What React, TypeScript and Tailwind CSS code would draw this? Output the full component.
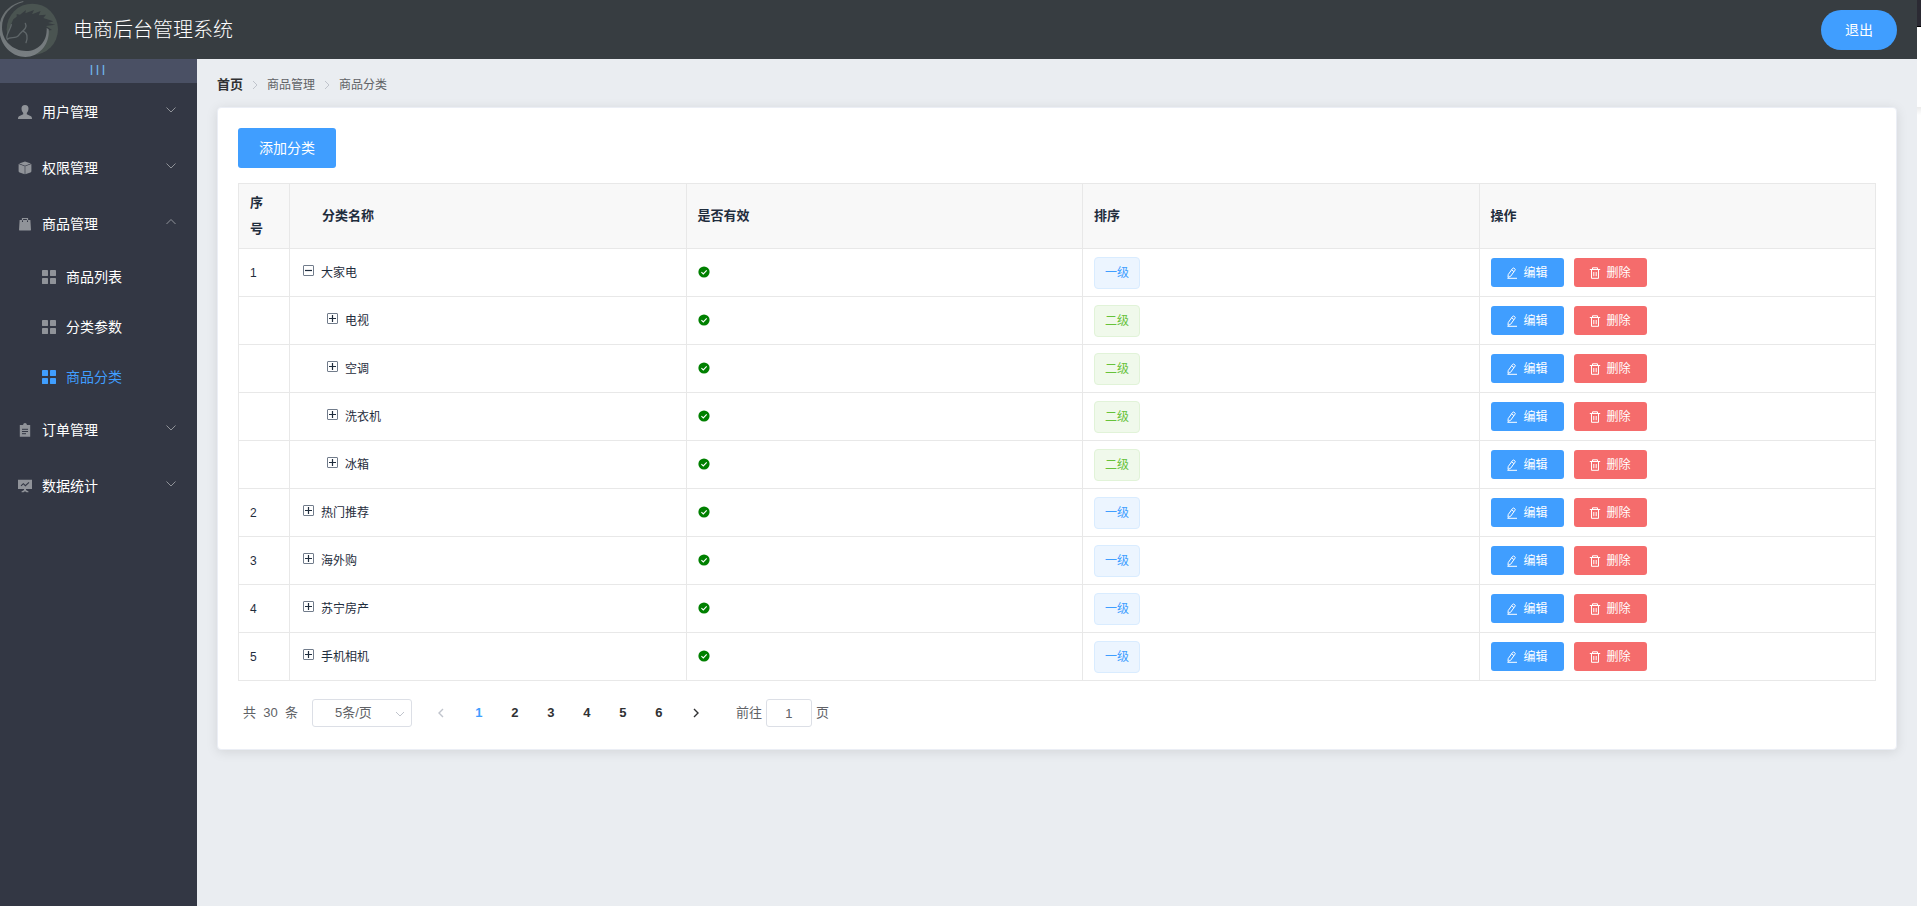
import { useState } from 'react';
import type { ReactNode } from 'react';
import clsx from 'clsx';

type MenuItem = { id: string; label: string; icon: ReactNode; children?: string[] };
type Category = { id: number; index?: number; name: string; level: 1 | 2; open?: boolean };

const MENUS: MenuItem[] = [
  { id: 'users', label: '用户管理', icon: <UserIcon /> },
  { id: 'rights', label: '权限管理', icon: <BoxIcon /> },
  { id: 'goods', label: '商品管理', icon: <BagIcon />, children: ['商品列表', '分类参数', '商品分类'] },
  { id: 'orders', label: '订单管理', icon: <ClipboardIcon /> },
  { id: 'reports', label: '数据统计', icon: <BoardIcon /> },
];

const CATEGORIES: Category[] = [
  { id: 1, index: 1, name: '大家电', level: 1, open: true },
  { id: 2, name: '电视', level: 2 },
  { id: 3, name: '空调', level: 2 },
  { id: 4, name: '洗衣机', level: 2 },
  { id: 5, name: '冰箱', level: 2 },
  { id: 6, index: 2, name: '热门推荐', level: 1 },
  { id: 7, index: 3, name: '海外购', level: 1 },
  { id: 8, index: 4, name: '苏宁房产', level: 1 },
  { id: 9, index: 5, name: '手机相机', level: 1 },
];

const PAGES = [1, 2, 3, 4, 5, 6];

function UserIcon() {
  return (
    <svg width="14" height="14" viewBox="0 0 14 14" fill="currentColor">
      <path d="M7 0C9.4 0 10.6 1.6 10.5 3.8C10.4 5.6 9.7 7 8.8 7.9V9.2L13 11.2C13.7 11.6 14 12.4 14 14H0C0 12.4 .3 11.6 1 11.2L5.2 9.2V7.9C4.3 7 3.6 5.6 3.5 3.8C3.4 1.6 4.6 0 7 0Z" />
    </svg>
  );
}

function BoxIcon() {
  return (
    <svg width="14" height="14" viewBox="0 0 14 14" fill="currentColor">
      <path d="M7 .6L12.8 2.6L7 4.7L1.2 2.6Z" />
      <path d="M.6 3.1L6.7 5.3V13.3L1.6 11.6Q.6 11.2 .6 10.3Z" />
      <path d="M13.4 3.1L7.3 5.3V13.3L12.4 11.6Q13.4 11.2 13.4 10.3Z" />
    </svg>
  );
}

function BagIcon() {
  return (
    <svg width="14" height="14" viewBox="0 0 14 14">
      <path d="M4.5 4.5V1.5H9.5V4.5" fill="none" stroke="currentColor" strokeWidth="1.2" />
      <path d="M1.6 3H12.4L13 12.8Q13 13.4 12.4 13.4H1.6Q1 13.4 1 12.8Z" fill="currentColor" />
      <path d="M4.5 3.4V5M9.5 3.4V5" stroke="#333744" strokeWidth="1" />
    </svg>
  );
}

function ClipboardIcon() {
  return (
    <svg width="14" height="14" viewBox="0 0 14 14">
      <path d="M2 2H5Q5.3 0 7 0Q8.7 0 9 2H12.2V13.8H1.8V2Z" fill="currentColor" />
      <path d="M4 6.3H10M4 8.5H10M4 10.7H8" stroke="#333744" strokeWidth="1" />
    </svg>
  );
}

function BoardIcon() {
  return (
    <svg width="14" height="14" viewBox="0 0 14 14">
      <path d="M0 .8H14V10H8V11L10.5 12.5V13.3H8.5L7 12.3L5.5 13.3H3.5V12.5L6 11V10H0Z" fill="currentColor" />
      <path d="M3 6.8L5.3 4.7L7.4 6.7L11 3.4" fill="none" stroke="#333744" strokeWidth="1.1" />
    </svg>
  );
}

function GridIcon() {
  return (
    <svg width="14" height="14" viewBox="0 0 14 14" fill="currentColor">
      <rect width="6" height="6" rx=".4" />
      <rect x="8" width="6" height="6" rx=".4" />
      <rect y="8" width="6" height="6" rx=".4" />
      <rect x="8" y="8" width="6" height="6" rx=".4" />
    </svg>
  );
}

function Chevron({ d, className }: { d: string; className?: string }) {
  return (
    <svg width="10" height="10" viewBox="0 0 10 10" fill="none" stroke="currentColor" className={className}>
      <path d={d} />
    </svg>
  );
}

function EditIcon() {
  return (
    <svg width="12" height="12" viewBox="0 0 12 12" fill="none" stroke="currentColor">
      <path d="M2 10.4L2.2 7.6L6.6 1.4Q7.2.7 8 1.2L8.9 1.9Q9.5 2.4 9.1 3.1L4.6 9.3Z" />
      <path d="M5.6 2.9L7.9 4.6M1.4 11.3H11" />
    </svg>
  );
}

function TrashIcon() {
  return (
    <svg width="12" height="12" viewBox="0 0 12 12" fill="none" stroke="currentColor">
      <path d="M.8 2.5H11.2M3.5 2.5V.8H8.5V2.5M2.5 3V11.3H9.5V3M4.8 5V9.2M7.2 5V9.2" />
    </svg>
  );
}

function CheckIcon() {
  return (
    <svg width="12" height="12" viewBox="0 0 12 12" aria-label="有效" className="mb-0.5">
      <circle cx="6" cy="6" r="5.6" fill="#008000" />
      <path d="M3.4 6.2L5.3 8L8.7 4.4" fill="none" stroke="#fff" strokeWidth="1.1" />
    </svg>
  );
}

function ToggleIcon({ open }: { open?: boolean }) {
  return (
    <svg width="12" height="12" viewBox="0 0 12 12" fill="none">
      <rect x=".5" y=".5" width="10" height="10" rx=".5" stroke="#717c8b" />
      <path d={open ? 'M2 5.5H9' : 'M2 5.5H9M5.5 2V9'} stroke="#1f2d3d" strokeWidth="1.2" />
    </svg>
  );
}

function Logo() {
  return (
    <svg width="59" height="59" viewBox="0 0 177 177">
      <defs>
        <linearGradient id="ring" x1="0" y1="0" x2="0" y2="1">
          <stop offset="0" stopColor="#666c6e" />
          <stop offset="1" stopColor="#797f82" />
        </linearGradient>
      </defs>
      <circle cx="97" cy="88" r="77" fill="#4a5451" />
      <path
        d="M18 112L32 76L40 58L50 50L50 42L60 44L78 30L76 40L102 30L96 43L122 33L116 46L138 44L130 54L160 64L144 69L166 74L138 78L156 90L140 92L144 112L128 140L75 162L35 145Z"
        fill="#373d41"
      />
      <path
        d="M70 3C28 12-2 44-2 86C-2 134 34 171 76 171C118 171 150 132 146 88L140 84C142 124 116 153 78 153C38 153 6 122 6 82C6 44 32 16 70 6Z"
        fill="url(#ring)"
      />
      <g fill="none" stroke="#5f6669" strokeWidth="4" strokeLinecap="round">
        <path d="M76 70C84 86 66 92 56 106C48 118 30 108 22 118C14 108 32 88 34 74" />
        <path d="M70 94C82 98 84 112 78 128" />
      </g>
    </svg>
  );
}

function Sidebar() {
  const [openId, setOpenId] = useState('goods');
  const [active, setActive] = useState('商品分类');

  return (
    <aside className="w-[197px] shrink-0 bg-[#333744] text-sm text-white">
      <button className="flex h-6 w-full items-center justify-center bg-[#4a5064] pr-0.5 font-['Liberation_Mono',monospace] text-[10px] font-bold text-[#6fb4e8]">
        |||
      </button>
      <nav className="pt-px">
        {MENUS.map((menu) => (
          <div key={menu.id}>
            <button
              onClick={() => setOpenId(openId === menu.id ? '' : menu.id)}
              className="flex h-14 w-full items-center gap-[5px] pr-[21px] pl-[13px]"
            >
              <span className="flex w-6 justify-center text-[#909399]">{menu.icon}</span>
              <span>{menu.label}</span>
              <Chevron
                d={openId === menu.id ? 'M.5 7L5 2.5L9.5 7' : 'M.5 2.5L5 7L9.5 2.5'}
                className="mb-1 ml-auto text-[#909399]"
              />
            </button>
            {openId === menu.id &&
              menu.children?.map((child) => (
                <a
                  key={child}
                  href="#"
                  onClick={() => setActive(child)}
                  className={clsx('flex h-[50px] items-center gap-[5px] pl-[37px]', active === child && 'text-[#409eff]')}
                >
                  <span className={clsx('flex w-6 justify-center', active !== child && 'text-[#909399]')}>
                    <GridIcon />
                  </span>
                  {child}
                </a>
              ))}
          </div>
        ))}
      </nav>
    </aside>
  );
}

function CategoryRow({ row }: { row: Category }) {
  return (
    <tr className="h-12">
      <td className="border border-[#e8e8e8] px-[11px]">{row.index}</td>
      <td className={clsx('border border-[#e8e8e8]', row.level === 1 ? 'pl-[13px]' : 'pl-[37px]')}>
        <div className="flex items-center gap-1.5">
          <button aria-label={row.open ? '收起' : '展开'} className="mb-1">
            <ToggleIcon open={row.open} />
          </button>
          {row.name}
        </div>
      </td>
      <td className="border border-[#e8e8e8] px-[11px]">
        <CheckIcon />
      </td>
      <td className="border border-[#e8e8e8] px-[11px]">
        <span
          className={clsx(
            'inline-flex h-8 items-center rounded border px-2.5 align-middle',
            row.level === 1
              ? 'border-[#d9ecff] bg-[#ecf5ff] text-[#409eff]'
              : 'border-[#e1f3d8] bg-[#f0f9eb] text-[#67c23a]',
          )}
        >
          {row.level === 1 ? '一级' : '二级'}
        </span>
      </td>
      <td className="border border-[#e8e8e8] px-[11px]">
        <div className="flex gap-2.5 text-white">
          <button className="flex h-[29px] w-[73px] items-center justify-center gap-[5px] rounded-[3px] bg-[#409eff]">
            <EditIcon />
            编辑
          </button>
          <button className="flex h-[29px] w-[73px] items-center justify-center gap-[5px] rounded-[3px] bg-[#f56c6c]">
            <TrashIcon />
            删除
          </button>
        </div>
      </td>
    </tr>
  );
}

function Pagination() {
  const [page, setPage] = useState(1);

  return (
    <div className="mt-4 flex items-center px-[5px] py-0.5 text-[13px] text-[#606266]">
      <span className="mr-3.5 whitespace-pre">共  30  条</span>
      <div className="relative">
        <select
          aria-label="每页条数"
          className="block h-7 w-[100px] appearance-none rounded-[3px] border border-[#dcdfe6] bg-white pl-[22px] text-[13px]"
        >
          <option>5条/页</option>
          <option>10条/页</option>
          <option>15条/页</option>
        </select>
        <Chevron d="M1 3L5 7L9 3" className="pointer-events-none absolute top-2.5 right-[7px] text-[#c0c4cc]" />
      </div>
      <button aria-label="上一页" disabled className="ml-2.5 flex h-7 w-[39px] items-center justify-center text-[#c0c4cc]">
        <Chevron d="M7 1L3 5L7 9" className="stroke-[1.4]" />
      </button>
      {PAGES.map((n) => (
        <button
          key={n}
          onClick={() => setPage(n)}
          className={clsx('h-7 w-9 font-bold', n === page ? 'text-[#409eff]' : 'text-[#303133]')}
        >
          {n}
        </button>
      ))}
      <button aria-label="下一页" className="flex h-7 w-[39px] items-center justify-center text-[#303133]">
        <Chevron d="M3 1L7 5L3 9" className="stroke-[1.4]" />
      </button>
      <label className="ml-5 flex items-center gap-1">
        前往
        <input
          value={page}
          onChange={(e) => setPage(Number(e.target.value) || 1)}
          className="h-7 w-[46px] rounded-[3px] border border-[#dcdfe6] bg-white text-center"
        />
        页
      </label>
    </div>
  );
}

export default function App() {
  return (
    <div className="flex min-h-screen font-['Liberation_Sans','Noto_Sans_CJK_SC',sans-serif]">
      <div className="flex min-w-0 flex-1 flex-col">
        <header className="flex h-[59px] items-center justify-between bg-[#373d41] pr-5 text-white">
          <div className="flex items-center gap-3.5">
            <Logo />
            <h1 className="text-xl font-light">电商后台管理系统</h1>
          </div>
          <button className="h-10 rounded-full bg-[#409eff] px-6 text-sm">退出</button>
        </header>

        <div className="flex flex-1">
          <Sidebar />
          <main className="min-w-0 flex-1 bg-[#eaedf1] p-5">
            <nav className="mb-4 flex items-center text-xs/3 text-[#606266]">
              <a href="#" className="text-[13px]/3 font-bold text-[#303133]">
                首页
              </a>
              <Chevron d="M3 1L7 5L3 9" className="mx-[7px] text-[#c0c4cc]" />
              <span>商品管理</span>
              <Chevron d="M3 1L7 5L3 9" className="mx-[7px] text-[#c0c4cc]" />
              <span>商品分类</span>
            </nav>

            <section className="rounded border border-[#ebeef5] bg-white p-5 shadow-[0_2px_12px_rgba(0,0,0,0.1)]">
              <button className="h-10 rounded-[3px] bg-[#409eff] px-[21px] text-sm text-white">添加分类</button>

              <table className="mt-[15px] w-full table-fixed border-collapse text-xs text-[#1f2d3d]">
                <colgroup>
                  <col className="w-[51px]" />
                  <col />
                  <col />
                  <col />
                  <col />
                </colgroup>
                <thead>
                  <tr className="h-[65px] bg-[#f8f8f8] text-left text-[13px]/[26px]">
                    <th className="border border-[#e8e8e8] pr-6 pl-[11px]">序号</th>
                    <th className="border border-[#e8e8e8] pl-8">分类名称</th>
                    <th className="border border-[#e8e8e8] px-[11px]">是否有效</th>
                    <th className="border border-[#e8e8e8] px-[11px]">排序</th>
                    <th className="border border-[#e8e8e8] px-[11px]">操作</th>
                  </tr>
                </thead>
                <tbody>
                  {CATEGORIES.map((row) => (
                    <CategoryRow key={row.id} row={row} />
                  ))}
                </tbody>
              </table>

              <Pagination />
            </section>
          </main>
        </div>
      </div>
      {/* edge of the neighbouring panel */}
      <div className="w-1 shrink-0 bg-white">
        <div className="h-[27px] border-b border-black bg-[#2b2a33]" />
        <div className="mt-20 h-2 bg-linear-to-b from-[#ececec] to-white" />
      </div>
    </div>
  );
}
